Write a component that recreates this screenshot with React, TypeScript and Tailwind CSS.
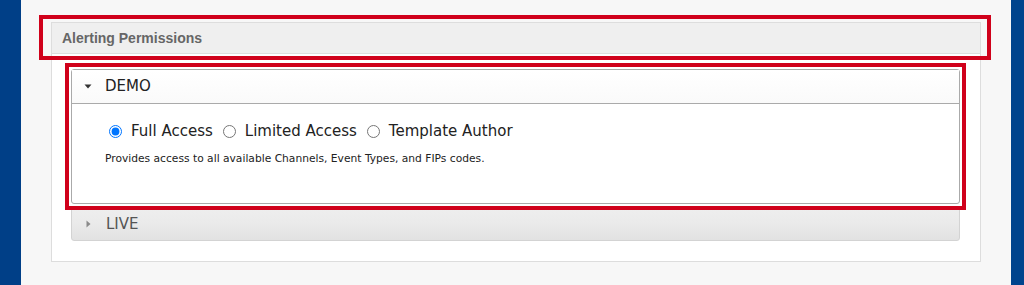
import { useState } from "react"

const options = ["Full Access", "Limited Access", "Template Author"]

const descriptions: Record<string, string> = {
  "Full Access": "Provides access to all available Channels, Event Types, and FIPs codes.",
  "Limited Access": "Provides access to a limited set of Channels, Event Types, and FIPs codes.",
  "Template Author": "Allows creating and editing alert templates only.",
}

function Caret({ open }: { open: boolean }) {
  return open ? (
    <svg width="8" height="5" viewBox="0 0 8 5" className="shrink-0">
      <polygon points="0.5,0.5 7.5,0.5 4,4.5" fill="#333" />
    </svg>
  ) : (
    <svg width="5" height="8" viewBox="0 0 5 8" className="shrink-0">
      <polygon points="0.5,0.5 4.5,4 0.5,7.5" fill="#8a8a8a" />
    </svg>
  )
}

export default function App() {
  const [access, setAccess] = useState("Full Access")
  const [openDemo, setOpenDemo] = useState(true)

  return (
    <div className="flex h-[285px] w-full bg-[#f7f7f7] font-['DejaVu_Sans',sans-serif]">
      <div className="w-[21px] shrink-0 bg-[#003f87]" />
      <div className="flex-1 px-[30px] pt-[22px]">
        <div className="relative border border-[#dddddd] bg-white">
          <div className="flex h-[31px] items-center border-b border-[#dddddd] bg-[#efefef] pl-[10px] font-['Liberation_Sans',Arial,sans-serif] text-[14px] font-bold text-[#666666]">
            Alerting Permissions
          </div>
          {/* annotation box round the panel title */}
          <div className="pointer-events-none absolute -left-[13px] -top-[8px] h-[45px] w-[952px] border-4 border-[#d0011b]" />
          <div className="pl-[19px] pr-[20px] pt-[15px] pb-[20px]">
            <div className="relative">
              <div className="rounded-[3px] border border-[#aaaaaa]">
                <div
                  className="flex h-[34px] cursor-pointer items-center border-b border-[#aaaaaa] bg-gradient-to-b from-white to-[#fafafa] pl-[12px] text-[15px] text-[#222222]"
                  onClick={() => setOpenDemo(!openDemo)}
                >
                  <Caret open={openDemo} />
                  <span className="ml-[13px]">DEMO</span>
                </div>
                <div className="h-[99px] pt-[18px]">
                  <div className="flex h-[18px] items-center pl-[37px] text-[15px] text-[#222222]">
                    {options.map((o, i) => (
                      <label key={o} className={`flex items-center ${i > 0 ? "ml-[10px]" : ""}`}>
                        <input
                          type="radio"
                          name="demo-access"
                          className="m-0 h-[13px] w-[13px] accent-[#0075ff]"
                          checked={access === o}
                          onChange={() => setAccess(o)}
                        />
                        <span className="ml-[9px]">{o}</span>
                      </label>
                    ))}
                  </div>
                  <p className="mt-[12px] pl-[33px] text-[10.7px] leading-[14px] text-[#222222]">
                    {descriptions[access]}
                  </p>
                </div>
              </div>
              {/* annotation box round the DEMO section */}
              <div className="pointer-events-none absolute -left-[6px] -top-[6px] -right-[6px] -bottom-[6px] border-4 border-[#d0011b]" />
            </div>
            <div className="mt-[3px] flex h-[34px] items-center rounded-[3px] border border-[#d3d3d3] bg-gradient-to-b from-[#eeeeee] via-[#eaeaea] to-[#e2e2e2] pl-[14px] text-[15px] text-[#555555]">
              <Caret open={false} />
              <span className="ml-[15px]">LIVE</span>
            </div>
          </div>
        </div>
      </div>
      <div className="w-[13px] shrink-0 bg-[#00448d]" />
    </div>
  )
}
